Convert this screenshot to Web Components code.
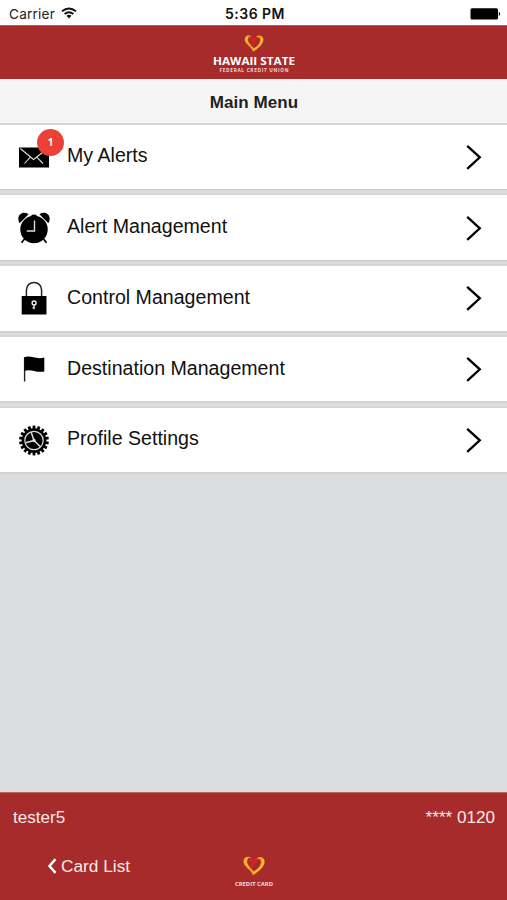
<!DOCTYPE html>
<html lang="en">
<head>
<meta charset="utf-8">
<title>Main Menu</title>
<style>
  body {
    margin: 0;
    font-family: "Liberation Sans", Arial, sans-serif;
    color: #111;
  }
</style>
</head>
<body>
<card-app></card-app>

<template id="app-template">
  <style>
    :host {
      display: flex;
      flex-direction: column;
      height: 900px;
      background: #dcdddf;
      overflow: hidden;
    }
    h1 {
      box-sizing: border-box;
      height: 45.6px;
      margin: 0;
      border-bottom: 2px solid #d9d9d9;
      background: #f5f5f5;
      color: #222;
      font-size: 17px;
      line-height: 47px;
      letter-spacing: .05px;
      text-indent: 1px;
      text-align: center;
    }
    nav {
      display: flex;
      flex-direction: column;
      gap: 6.4px;
      flex: 1;
    }
  </style>
  <status-bar></status-bar>
  <brand-header></brand-header>
  <h1>Main Menu</h1>
  <nav>
    <menu-row icon="mail" badge="1">My Alerts</menu-row>
    <menu-row icon="clock">Alert Management</menu-row>
    <menu-row icon="lock">Control Management</menu-row>
    <menu-row icon="flag">Destination Management</menu-row>
    <menu-row icon="gear">Profile Settings</menu-row>
  </nav>
  <card-footer>
    <span slot="user">tester5</span>
    <span slot="card">**** 0120</span>
    <span slot="back">Card List</span>
  </card-footer>
</template>

<template id="status-template">
  <style>
    :host {
      display: grid;
      grid-template-columns: 1fr auto 1fr;
      align-items: center;
      box-sizing: border-box;
      height: 25px;
      padding: 3px 6px 0 9px;
      background: #fff;
      font: 13.6px/22px Inter, sans-serif;
      color: #222;
    }
    .left { display: flex; align-items: center; gap: 6px; letter-spacing: .2px; }
    b { font-weight: 600; font-size: 14px; letter-spacing: .45px; color: #111; }
    .battery { justify-self: end; }
    svg { display: block; }
    .left svg { margin-top: -2px; }
  </style>
  <div class="left">
    <span>Carrier</span>
    <svg width="16" height="12" viewBox="0 0 16 12" fill="none" stroke="#111" stroke-width="1.9">
      <path d="M1 4.3Q8-1.4 15 4.3M3.6 7.1Q8 3.5 12.4 7.1"/>
      <path d="M5.5 8.7Q8 6.9 10.5 8.7L8 11.4Z" fill="#111" stroke="none"/>
    </svg>
  </div>
  <b>5:36 PM</b>
  <svg class="battery" width="31" height="13" viewBox="0 0 31 13">
    <rect x=".5" y=".2" width="27.5" height="11.4" rx="1.5"/>
    <path d="M28.8 3.8Q31.6 5.9 28.8 8Z"/>
  </svg>
</template>

<template id="heart-template">
  <style>
    :host { display: block; }
    svg { display: block; width: 100%; height: 100%; }
  </style>
  <svg viewBox="1 1 20.5 18" fill="none">
    <path d="M8.6 2.2C4.2-.2.6 3 1.6 7.1 2.8 10.9 7.4 12.8 10 17.4 10.4 12.2 5.2 10 4.8 6.3 4.7 3.7 6.4 2.7 8.6 2.2Z" fill="#f6ad2b"/>
    <path d="M5.6 3.4Q9.8 4.1 11.2 8.4M15.2 2.9Q9.4 6.4 8.8 12.2" stroke="#da2226" stroke-width="2.2"/>
    <path d="M13.2 3.1C17.3-.4 22.4 2.5 21 7.5 19.7 12.7 14.4 15.8 10.2 18.8 9.2 15.5 7.7 13.6 6.6 12.4 9 13 10.4 14 11.2 14.8 14.3 12.9 17.4 10.3 17.7 6.7 17.9 4.1 15.9 2.7 13.2 3.1Z" fill="#f79c25"/>
    <path d="M19.9 4.1C20.7 9.4 15.4 13.7 11 16.8" stroke="#ffd042" stroke-width="1"/>
  </svg>
</template>

<template id="brand-template">
  <style>
    :host {
      display: flex;
      flex-direction: column;
      align-items: center;
      box-sizing: border-box;
      height: 54px;
      padding-top: 9px;
      border-top: 1px solid #bd5554;
      background: #a72b2a;
      color: #fff;
    }
    heart-mark { width: 20px; height: 17px; }
    .words { display: block; font-family: "Open Sans", sans-serif; fill: #fff; overflow: visible; }
    .name { font-size: 10.8px; font-weight: 700; }
    .kind { font-size: 4.7px; font-weight: 700; fill: #f3dcda; }
  </style>
  <heart-mark></heart-mark>
  <svg class="words" width="84" height="20">
    <text class="name" x="1" y="13" textLength="82" lengthAdjust="spacingAndGlyphs">HAWAII STATE</text>
    <text class="kind" x="7.5" y="19.6" textLength="69" lengthAdjust="spacing">FEDERAL CREDIT UNION</text>
  </svg>
</template>

<template id="row-template">
  <style>
    :host {
      display: flex;
      align-items: center;
      box-sizing: border-box;
      height: 64.4px;
      padding: 0 25px 0 17px;
      background: #fff;
      box-shadow: 0 2px #d0d1d2, 0 -2px #d5d6d7;
      font-size: 19.6px;
    }
    .icon { position: relative; width: 34px; height: 36px; margin-right: 16px; }
    svg { display: block; }
    .label { flex: 1; line-height: 24px; margin-top: -3px; }
    .badge {
      position: absolute;
      left: 20px;
      top: -10px;
      width: 27px;
      height: 27px;
      border-radius: 50%;
      background: #ed4138;
      color: #fff;
      font: bold 10px/27px "Open Sans", sans-serif;
      text-align: center;
    }
    .badge[hidden] { display: none; }
  </style>
  <div class="icon"><span class="badge" hidden></span></div>
  <span class="label"><slot></slot></span>
  <svg width="17" height="26" viewBox="0 0 17 26" fill="none" stroke="#000" stroke-width="2.3">
    <path d="M2.2 1.8L14.8 13.3 2.2 24.8"/>
  </svg>
</template>

<template id="footer-template">
  <style>
    :host {
      display: block;
      box-sizing: border-box;
      height: 108px;
      border-top: 1px solid #bb6160;
      background: #a72b2a;
      color: #fbe9e7;
      font-size: 17.1px;
    }
    .account {
      display: flex;
      justify-content: space-between;
      padding: 0 12px 0 13px;
      line-height: 49px;
    }
    .bar {
      display: grid;
      grid-template-columns: 1fr 44px 1fr;
      height: 58px;
    }
    .back {
      display: flex;
      align-items: center;
      gap: 4px;
      height: 48px;
      padding-left: 47px;
      font-size: 17.3px;
    }
    .card { display: flex; flex-direction: column; align-items: center; padding-top: 14px; }
    heart-mark { width: 22px; height: 20px; }
    svg { display: block; overflow: visible; }
    text { font: 700 5.5px "Open Sans", sans-serif; fill: #f5dedb; }
  </style>
  <div class="account"><slot name="user"></slot><slot name="card"></slot></div>
  <div class="bar">
    <div class="back">
      <svg width="10" height="16" viewBox="0 0 10 16" fill="none" stroke="#fff" stroke-width="2.5">
        <path d="M8.5 1.2L2.5 8 8.5 14.8"/>
      </svg>
      <slot name="back"></slot>
    </div>
    <div class="card">
      <heart-mark></heart-mark>
      <svg width="38" height="10"><text x="0" y="9.5" textLength="38" lengthAdjust="spacingAndGlyphs">CREDIT CARD</text></svg>
    </div>
  </div>
</template>

<script>
  // gear teeth are laid out evenly around the wheel
  const TEETH = 18;
  let teeth = '';
  for (let i = 0; i < TEETH; i++) {
    teeth += `<rect x="15.6" y="3.6" width="2.8" height="4.5" transform="rotate(${i * 360 / TEETH} 17 18.5)"/>`;
  }

  const ICONS = {
    mail: `
      <path d="M2 8.5h30v20H2z"/>
      <path d="M3.3 9.5L16.5 20.5 30.7 9.5M7.5 24.5L13.4 18.1M26 24.5L19.8 18.1" fill="none" stroke="#ddd" stroke-width="1.1"/>`,
    clock: `
      <circle cx="17" cy="19.5" r="13.7"/>
      <path d="M2.6 13.2C-1.6 5.6 5.4.2 11.6 4.2ZM31.4 13.2C35.6 5.6 28.6.2 22.4 4.2Z"/>
      <path d="M13.8 6Q17 3.2 20.2 6Z"/>
      <path d="M7.5 29L4.5 32.7M26.5 29L29.5 32.7" stroke="#000" stroke-width="1.8"/>
      <path d="M17.5 10.6V21H9.8" fill="none" stroke="#ddd" stroke-width="1.4"/>`,
    lock: `
      <path d="M9.4 17V10C9.4-.1 24.6-.1 24.6 10V17" fill="none" stroke="#222" stroke-width="1.5"/>
      <path d="M4.7 16h24.8v18.5H4.7z"/>
      <circle cx="17.1" cy="23" r="2" fill="none" stroke="#eee" stroke-width="1.4"/>
      <path d="M17.1 24.8V29.3M17 27.6H15.5" stroke="#eee" stroke-width="1.3"/>`,
    flag: `
      <path d="M7.6 6.2V30.5" stroke="#222" stroke-width="1.4"/>
      <path d="M7.4 6.2C13.5 4 19 8.8 27.3 6.6V20.4C19 22.2 14.5 17.5 7.4 19.8Z"/>`,
    gear: `
      ${teeth}
      <circle cx="17" cy="18.5" r="12.3"/>
      <circle cx="17" cy="18.5" r="9.2" fill="none" stroke="#ddd" stroke-width="1.2"/>
      <path d="M17 18.5L14.2 10.2M17 18.5L8.6 20.8M17 18.5L23.5 24.8" stroke="#ddd" stroke-width="1.5"/>
      <circle cx="17" cy="18.5" r="1.7" fill="#ddd"/>`
  };

  class BaseElement extends HTMLElement {
    constructor(id) {
      super();
      this._root = this.attachShadow({ mode: 'open' });
      this._root.appendChild(document.getElementById(id).content.cloneNode(true));
    }
  }

  class HeartMark extends BaseElement {
    constructor() { super('heart-template'); }
  }

  class StatusBar extends BaseElement {
    constructor() { super('status-template'); }
  }

  class BrandHeader extends BaseElement {
    constructor() { super('brand-template'); }
  }

  class MenuRow extends BaseElement {
    constructor() { super('row-template'); }

    connectedCallback() {
      const icon = this._root.querySelector('.icon');
      const badge = this._root.querySelector('.badge');
      icon.insertAdjacentHTML('afterbegin',
        `<svg width="34" height="36" viewBox="0 0 34 36">${ICONS[this.getAttribute('icon')]}</svg>`);
      if (this.hasAttribute('badge')) {
        badge.textContent = this.getAttribute('badge');
        badge.hidden = false;
      }
    }
  }

  class CardFooter extends BaseElement {
    constructor() { super('footer-template'); }
  }

  class CardApp extends BaseElement {
    constructor() { super('app-template'); }
  }

  customElements.define('heart-mark', HeartMark);
  customElements.define('status-bar', StatusBar);
  customElements.define('brand-header', BrandHeader);
  customElements.define('menu-row', MenuRow);
  customElements.define('card-footer', CardFooter);
  customElements.define('card-app', CardApp);
</script>
</body>
</html>
